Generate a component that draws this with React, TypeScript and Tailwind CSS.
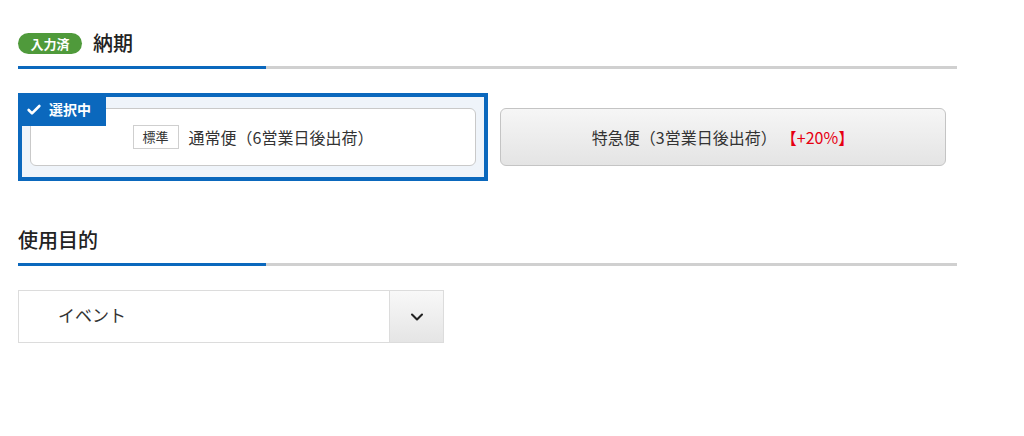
import React from "react";
import { Check, ChevronDown } from "lucide-react";

const font = { fontFamily: '"Noto Sans CJK JP", "Noto Sans", sans-serif' };

function SectionHeading({ title, badge }: { title: string; badge?: string }) {
  return (
    <div>
      <div className="flex h-[26px] items-center gap-[11px]">
        {badge && (
          <span className="flex h-[21px] w-[64px] items-center justify-center rounded-full bg-[#4f9a3b] text-[13px] font-bold leading-none text-white">
            {badge}
          </span>
        )}
        <span className="text-[20px] font-medium leading-none text-[#222]">{title}</span>
      </div>
      <div className="mt-[10px] flex h-[3px] w-[939px] bg-[#d0d0d0]">
        <div className="h-full w-[248px] bg-[#0b68bd]" />
      </div>
    </div>
  );
}

export default function App() {
  return (
    <div className="min-h-[436px] w-[1024px] bg-white pl-[18px] pt-[30px] text-[#333]" style={font}>
      <SectionHeading title="納期" badge="入力済" />

      <div className="mt-[24px] grid w-[940px] grid-cols-2">
        <div className="relative border-4 border-[#0b68bd] bg-[#eff4fa] px-2 py-[11px]">
          <div className="absolute left-[-4px] top-[-4px] flex h-[33px] w-[88px] items-center gap-[7px] bg-[#0b68bd] pl-[8px] text-[14px] font-bold text-white">
            <Check size={16} strokeWidth={4} />
            <span>選択中</span>
          </div>
          <div className="flex h-[58px] items-center justify-center gap-[10px] rounded-[6px] border border-[#c9c9c9] bg-white">
            <span className="flex h-[24px] items-center border border-[#cfcfcf] bg-white px-[9px] text-[13px]">標準</span>
            <span className="text-[16px]">通常便（6営業日後出荷）</span>
          </div>
        </div>
        <div className="border-4 border-transparent px-2 py-[11px]">
          <div className="flex h-[58px] items-center justify-center rounded-[6px] border border-[#c4c4c4] bg-gradient-to-b from-[#f6f6f6] to-[#e4e4e4] text-[16px]">
            <span>特急便（3営業日後出荷）</span>
            <span className="ml-[4px] text-[#e60012]">【+20%】</span>
          </div>
        </div>
      </div>

      <div className="mt-[46px]">
        <SectionHeading title="使用目的" />
      </div>

      <div className="mt-[24px] flex h-[53px] w-[426px] border border-[#dcdcdc] bg-white">
        <div className="flex flex-1 items-center pb-[4px] pl-[39px] text-[17px]">イベント</div>
        <div className="flex w-[54px] items-center justify-center border-l border-[#dcdcdc] bg-gradient-to-b from-[#f8f8f8] to-[#e5e5e5] text-[#222]">
          <ChevronDown size={20} strokeWidth={2.5} />
        </div>
      </div>
    </div>
  );
}
